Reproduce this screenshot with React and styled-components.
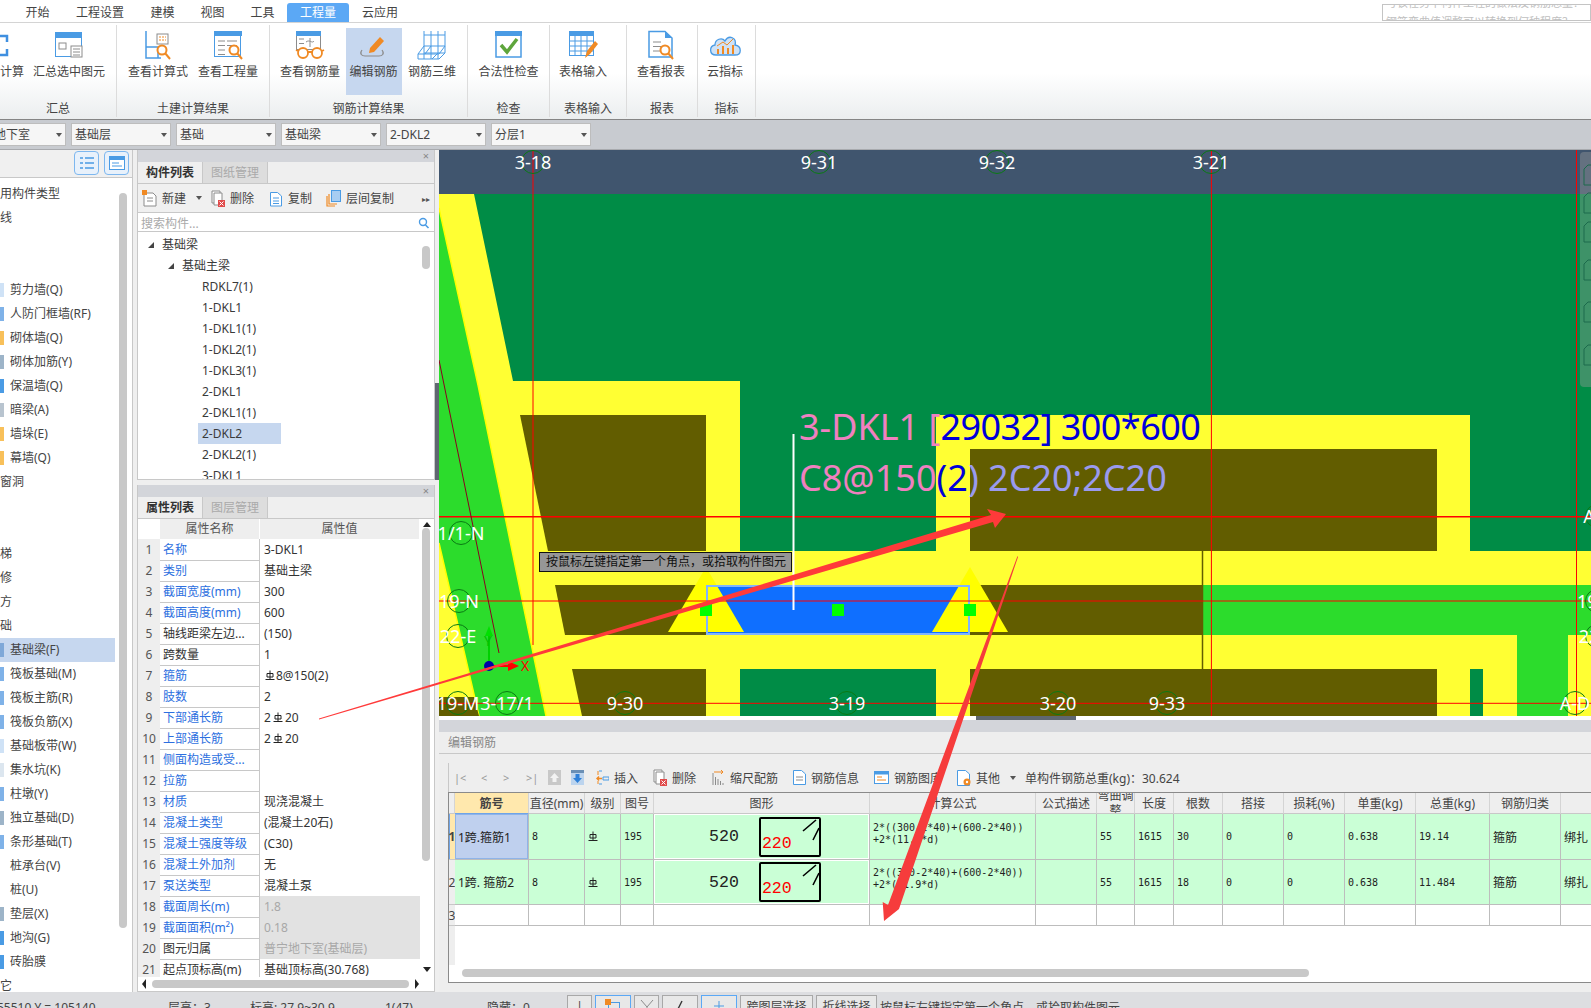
import React from 'react';
import styled, { createGlobalStyle } from 'styled-components';

const GlobalStyle = createGlobalStyle`
  html, body { margin: 0; padding: 0; background: #eee; }
  * { box-sizing: border-box; }
  body {
    font-family: "Noto Sans", "Noto Sans CJK SC", sans-serif;
    font-size: 12px;
    color: #333;
  }
`;

const Page = styled.div`
  position: relative;
  width: 1591px;
  height: 1008px;
  overflow: hidden;
  display: flex;
  flex-direction: column;
`;

/* top tabs */
const TabBar = styled.div`
  height: 23px;
  flex: none;
  background: #fff;
  border-bottom: 1px solid #d4d4d4;
  display: flex;
  align-items: flex-end;
  padding-left: 13px;
`;

const Tab = styled.div`
  height: 19px;
  width: ${(p) => p.$w}px;
  line-height: 20px;
  text-align: center;
  border-radius: 3px 3px 0 0;
  background: ${(p) => (p.$active ? '#5ba8f5' : 'transparent')};
  color: ${(p) => (p.$active ? '#fff' : '#444')};
`;

const HelpBox = styled.div`
  margin-left: auto;
  align-self: flex-start;
  margin-top: 4px;
  width: 209px;
  height: 17px;
  border: 1px solid #c4c4c4;
  overflow: hidden;
  color: #c0c0c0;
  font-size: 11px;
  line-height: 12px;
  white-space: nowrap;
  padding-left: 3px;
`;

const HelpLine = styled.div`
  margin-top: ${(p) => p.$mt}px;
  height: 12px;
`;

/* ribbon */
const Ribbon = styled.div`
  height: 97px;
  flex: none;
  display: flex;
  padding-top: 2px;
  background: linear-gradient(#fff 0, #fff 50px, #ebeeef 96px);
  border-bottom: 1px solid #858585;
`;

const RibbonGroup = styled.div`
  width: ${(p) => p.$w}px;
  height: 92px;
  display: flex;
  flex-direction: column;
  border-right: 1px solid #dcdcdc;
`;

const RibbonButtons = styled.div`
  height: 70px;
  padding-top: 3px;
  display: flex;
  justify-content: ${(p) => (p.$start ? 'flex-start' : 'center')};
`;

const RibbonButton = styled.div`
  width: ${(p) => p.$w}px;
  height: 67px;
  flex: none;
  display: flex;
  flex-direction: column;
  align-items: center;
  padding-top: 1px;
  background: ${(p) => (p.$active ? '#c6d7ef' : 'transparent')};
  white-space: nowrap;
`;

const IconSlot = styled.div`
  height: 32px;
  display: flex;
  align-items: center;
  justify-content: center;
  align-self: ${(p) => (p.$left ? 'flex-start' : 'center')};
`;

const RibbonLabel = styled.div`
  margin-top: 3px;
  line-height: 16px;
  color: #444;
`;

const GroupLabel = styled.div`
  text-align: center;
  line-height: 16px;
  margin-top: 6px;
  color: #444;
`;

/* filter bar */
const FilterBar = styled.div`
  height: 30px;
  flex: none;
  background: #c8cbd0;
  border-bottom: 1px solid #a8aaae;
  display: flex;
  align-items: center;
  gap: 5px;
`;

const SelectBox = styled.div`
  width: 100px;
  height: 23px;
  margin-left: ${(p) => p.$ml || 0}px;
  background: #f6f6f6;
  border: 1px solid #bdbdbd;
  padding-left: 3px;
  line-height: 20px;
  color: #444;
  display: flex;
  justify-content: space-between;
  align-items: center;
  padding-right: 3px;
`;

const Caret = styled.span`
  width: 0;
  height: 0;
  flex: none;
  border-left: 3px solid transparent;
  border-right: 3px solid transparent;
  border-top: 4px solid #555;
  margin-left: ${(p) => p.$ml || 0}px;
`;

/* main area */
const Main = styled.div`
  flex: none;
  height: 842px;
  display: flex;
  background: #efefef;
`;

const LeftPanel = styled.div`
  width: 133px;
  flex: none;
  border-right: 1px solid #c8c8c8;
  background: #fff;
  position: relative;
  overflow: hidden;
`;

const LeftHead = styled.div`
  height: 28px;
  background: #f0f0f0;
  border-bottom: 1px solid #c8c8c8;
  display: flex;
  justify-content: flex-end;
  gap: 5px;
  padding: 1px 3px 0 0;
`;

const ViewButton = styled.div`
  width: 25px;
  height: 24px;
  border: 1px solid #7db7ef;
  border-radius: 4px;
  background: #e8f1fb;
  display: flex;
  align-items: center;
  justify-content: center;
`;

const LeftList = styled.div`
  padding-top: 4px;
`;

const LeftRow = styled.div`
  height: 24px;
  width: 115px;
  line-height: 24px;
  display: flex;
  align-items: center;
  white-space: nowrap;
  background: ${(p) => (p.$active ? '#c6d7ef' : 'transparent')};
  color: #444;
`;

const LeftMark = styled.span`
  height: 14px;
  flex: none;
  margin-right: ${(p) => (p.$plain ? 0 : 6)}px;
  background: ${(p) => p.$c || 'transparent'};
  width: ${(p) => (p.$plain ? 0 : 4)}px;
`;

const LeftScroll = styled.div`
  position: absolute;
  left: 119px;
  top: 43px;
  width: 8px;
  height: 735px;
  border-radius: 4px;
  background: #c8c8c8;
`;

const MiddleColumn = styled.div`
  width: 298px;
  margin-left: 4px;
  flex: none;
  display: flex;
  flex-direction: column;
  gap: 5px;
`;

const Panel = styled.div`
  height: ${(p) => p.$h}px;
  flex: none;
  background: #fff;
  border: 1px solid #c8c8c8;
  border-top: none;
  position: relative;
  overflow: hidden;
`;

const PanelStrip = styled.div`
  height: 12px;
  background: #d3d5da;
  text-align: right;
  padding-right: 5px;
  line-height: 11px;
  font-size: 11px;
  color: #888;
`;

const PanelTabs = styled.div`
  height: 22px;
  display: flex;
  background: #efefef;
  border-bottom: 1px solid #c8c8c8;
`;

const PanelTab = styled.div`
  width: 65px;
  text-align: center;
  line-height: 21px;
  font-weight: ${(p) => (p.$active ? 700 : 400)};
  color: ${(p) => (p.$active ? '#333' : '#aaa')};
  background: ${(p) => (p.$active ? '#efefef' : '#dddddd')};
  border-right: 1px solid #c8c8c8;
`;

const MiniBar = styled.div`
  height: 29px;
  background: #f0f0f0;
  border-bottom: 1px solid #c8c8c8;
  display: flex;
  align-items: center;
  padding-left: 4px;
  position: relative;
`;

const MiniItem = styled.div`
  width: ${(p) => p.$w}px;
  flex: none;
  display: flex;
  align-items: center;
  gap: 5px;
  color: #444;
  white-space: nowrap;
`;

const MoreMark = styled.span`
  position: absolute;
  right: 4px;
  font-size: 8px;
  color: #555;
`;

const SearchRow = styled.div`
  height: 19px;
  border-bottom: 1px solid #c8c8c8;
  padding: 1px 4px 0 3px;
  display: flex;
  justify-content: space-between;
  align-items: center;
  color: #aaa;
  background: #fff;
`;

const TreeWrap = styled.div`
  padding-top: 2px;
`;

const TreeRow = styled.div`
  height: 21px;
  line-height: 21px;
  display: flex;
  align-items: center;
  padding-left: ${(p) => p.$indent}px;
  color: #3a3a3a;
`;

const TreeLabel = styled.span`
  padding: 0 ${(p) => (p.$active ? 33 : 0)}px 0 4px;
  background: ${(p) => (p.$active ? '#c6d7ef' : 'transparent')};
  height: 21px;
  min-width: 83px;
`;

const TreeArrow = styled.span`
  width: 0;
  height: 0;
  flex: none;
  margin-right: 8px;
  border-bottom: 6px solid #444;
  border-left: 6px solid transparent;
`;

const VScroll = styled.div`
  position: absolute;
  left: 284px;
  top: ${(p) => p.$top}px;
  width: 8px;
  height: ${(p) => p.$h}px;
  border-radius: 4px;
  background: #c8c8c8;
`;

const PropHead = styled.div`
  display: grid;
  grid-template-columns: 22px 100px 160px;
  height: 20px;
`;

const PropHeadCell = styled.div`
  text-align: center;
  line-height: 19px;
  background: ${(p) => (p.$blank ? '#fff' : '#eee')};
  border-right: 1px solid #fff;
  color: #555;
`;

const PropBody = styled.div`
  height: 438px;
  overflow: hidden;
`;

const PropRow = styled.div`
  display: grid;
  grid-template-columns: 22px 100px 160px;
  height: 21px;
`;

const PropIndex = styled.div`
  background: #eee;
  border-bottom: 1px solid #c8c8c8;
  text-align: center;
  line-height: 21px;
  color: #555;
`;

const PropName = styled.div`
  padding-left: 3px;
  line-height: 21px;
  border-bottom: 1px solid #c8c8c8;
  border-right: 1px solid #c8c8c8;
  color: ${(p) => (p.$link ? '#2c6fe0' : '#333')};
  white-space: nowrap;
  overflow: hidden;
`;

const PropValue = styled.div`
  padding-left: 4px;
  line-height: 21px;
  border-bottom: 1px solid #c8c8c8;
  background: ${(p) => (p.$gray ? '#e2e2e2' : '#fff')};
  color: ${(p) => (p.$gray ? '#a8a8a8' : '#333')};
  white-space: nowrap;
  display: flex;
  align-items: center;
`;

const RebarGlyph = styled.svg`
  flex: none;
  margin: 0 ${(p) => p.$gap || 0}px;
`;

const HScroll = styled.div`
  height: 13px;
  display: flex;
  align-items: center;
  padding-left: 4px;
`;

const HThumb = styled.div`
  width: 257px;
  height: 8px;
  margin: 0 6px;
  border-radius: 4px;
  background: #c8c8c8;
`;

const SideArrow = styled.span`
  width: 0;
  height: 0;
  border-top: 5px solid transparent;
  border-bottom: 5px solid transparent;
  border-${(p) => (p.$left ? 'right' : 'left')}: 4px solid #222;
`;

const VArrow = styled.span`
  position: absolute;
  left: 285px;
  top: ${(p) => p.$top}px;
  width: 0;
  height: 0;
  border-left: 4px solid transparent;
  border-right: 4px solid transparent;
  border-${(p) => (p.$up ? 'bottom' : 'top')}: 5px solid #222;
`;

const Gutter = styled.div`
  width: 4px;
  flex: none;
  display: flex;
  flex-direction: column;
`;

const GutterDark = styled.div`
  margin-top: 233px;
  height: 97px;
  background: #5f6770;
`;

const RightColumn = styled.div`
  flex: 1;
  min-width: 0;
  display: flex;
  flex-direction: column;
`;

const Canvas = styled.svg`
  display: block;
  width: 1152px;
  height: 566px;
  flex: none;
`;

const AxisText = styled.text`
  font-family: "Noto Sans", sans-serif;
  font-size: 18px;
  fill: #fff;
`;

const BeamText = styled.text`
  font-family: "Noto Sans", sans-serif;
  font-size: 36px;
`;

const BeamNarrow = styled.tspan`
  letter-spacing: -0.55px;
`;

const AxisMark = styled.text`
  font-family: "Noto Sans", sans-serif;
  font-size: 14px;
`;

const Tooltip = styled.div`
  position: absolute;
  left: 539px;
  top: 552px;
  width: 253px;
  height: 20px;
  background: #969696;
  border: 1px solid #111;
  color: #111;
  line-height: 18px;
  padding-left: 6px;
  white-space: nowrap;
`;

const Splitter = styled.div`
  height: 4px;
  flex: none;
  background: #fff;
  padding-left: 537px;
`;

const SplitterGrip = styled.div`
  width: 100px;
  height: 4px;
  background: #5f6770;
`;

const RebarPanel = styled.div`
  flex: 1;
  min-height: 0;
  background: #eee;
  display: flex;
  flex-direction: column;
`;

const RebarTitle = styled.div`
  height: 22px;
  flex: none;
  padding-left: 9px;
  line-height: 21px;
  color: #888;
  border-bottom: 1px solid #c8c8c8;
`;

const RebarToolbar = styled.div`
  height: 29px;
  flex: none;
  margin: 9px 0 0 9px;
  border-left: 1px solid #c8c8c8;
  display: flex;
  align-items: center;
  padding-left: 5px;
`;

const NavMark = styled.span`
  width: ${(p) => p.$w}px;
  flex: none;
  color: #999;
  font-size: 11px;
`;

const RebarTotal = styled.span`
  white-space: nowrap;
  color: #444;
`;

const RebarTable = styled.div`
  margin-left: 9px;
  height: 191px;
  flex: none;
  background: #fff;
  border: 1px solid #8a8a8a;
  border-right: none;
  overflow: hidden;
  display: flex;
  flex-direction: column;
`;

const RebarGrid = styled.div`
  width: 1180px;
  flex: none;
  display: grid;
  grid-template-columns: 6px 74px 56px 36px 33px 216px 166px 61px 38px 39px 49px 61px 61px 71px 74px 71px 60px;
  grid-template-rows: 21px 46px 45px 21px;
`;

const HeadCell = styled.div`
  display: flex;
  align-items: center;
  justify-content: center;
  text-align: center;
  overflow: hidden;
  line-height: 15px;
  background: ${(p) => (p.$key ? '#ffe8ad' : '#eee')};
  font-weight: ${(p) => (p.$key ? 700 : 400)};
  border-right: 1px solid #d4d4d4;
  border-bottom: 1px solid ${(p) => (p.$key ? '#6ea4e8' : '#c8c8c8')};
  color: #444;
  white-space: ${(p) => (p.$wrap ? 'normal' : 'nowrap')};
`;

const RowHead = styled.div`
  background: ${(p) => (p.$on ? '#ffe8ad' : '#eee')};
  border-bottom: 1px solid #c8c8c8;
  font-weight: ${(p) => (p.$on ? 700 : 400)};
  display: flex;
  align-items: center;
  justify-content: center;
  overflow: hidden;
  color: #444;
  box-shadow: ${(p) => (p.$on ? 'inset 1px 0 0 #6ea4e8' : 'none')};
`;

const DataCell = styled.div`
  background: ${(p) => (p.$sel ? '#bfd0ee' : p.$blank ? '#fff' : '#caffd6')};
  border-right: 1px solid #bdbdbd;
  border-bottom: 1px solid #bdbdbd;
  box-shadow: ${(p) => (p.$sel ? 'inset 0 0 0 1px #8fb4e8' : 'none')};
  display: flex;
  align-items: center;
  padding-left: 3px;
  font-family: ${(p) => (p.$cjk ? '"Noto Sans", "Noto Sans CJK SC", sans-serif' : '"DejaVu Sans Mono", monospace')};
  font-size: ${(p) => (p.$cjk ? 12 : 10)}px;
  color: #222;
  white-space: nowrap;
  overflow: hidden;
`;

const FormulaCell = styled(DataCell)`
  white-space: pre-line;
  line-height: 12px;
  padding-bottom: 6px;
`;

const ShapeCell = styled.div`
  background: #caffd6;
  border-right: 1px solid #bdbdbd;
  border-bottom: 1px solid #bdbdbd;
  box-shadow: inset 0 0 0 1px #fff;
  display: flex;
  align-items: center;
  padding-left: 55px;
  gap: 20px;
`;

const ShapeNumber = styled.span`
  font-family: "Liberation Mono", monospace;
  font-size: 16.6px;
  color: #222;
`;

const ShapeBox = styled.div`
  width: 62px;
  height: 40px;
  border: 2px solid #000;
  border-radius: 2px;
  position: relative;
  display: flex;
  align-items: flex-end;
  padding: 0 0 1px 1px;
`;

const ShapeRed = styled.span`
  font-family: "Liberation Mono", monospace;
  font-size: 16.6px;
  line-height: 20px;
  color: #f00;
`;

const ShapeTicks = styled.svg`
  position: absolute;
  right: 0;
  top: 0;
  width: 26px;
  height: 24px;
`;

const TableFiller = styled.div`
  height: 39px;
  flex: none;
  width: 6px;
  background: #eee;
`;

const TableScroll = styled.div`
  height: 16px;
  flex: none;
  padding: 4px 0 0 13px;
`;

const TableThumb = styled.div`
  width: 847px;
  height: 8px;
  border-radius: 4px;
  background: #c8c8c8;
`;

/* status bar */
const StatusBar = styled.div`
  height: 30px;
  flex: none;
  background: #dddee1;
  display: flex;
  padding-top: 3px;
  color: #444;
  white-space: nowrap;
`;

const StatusText = styled.div`
  width: ${(p) => p.$w}px;
  flex: none;
  margin-left: ${(p) => p.$ml || 0}px;
  padding-top: 5px;
  line-height: 16px;
`;

const StatusButton = styled.div`
  width: ${(p) => p.$w}px;
  height: 24px;
  flex: none;
  margin-right: 3px;
  background: #e8e8e8;
  border: 1px solid ${(p) => (p.$blue ? '#5ba8f5' : '#a8a8a8')};
  display: flex;
  align-items: flex-start;
  justify-content: center;
  padding-top: 3px;
  gap: 3px;
  line-height: 16px;
`;

const ArrowOverlay = styled.svg`
  position: absolute;
  left: 0;
  top: 0;
  width: 1591px;
  height: 1008px;
  pointer-events: none;
`;

const BLUE = '#4a9be4';
const ORANGE = '#f08a24';
const GRAY = '#8c8c8c';

const S = ({ w = 30, h = 30, children }) => (
  <svg width={w} height={h} viewBox={`0 0 ${w} ${h}`} fill="none" strokeWidth="1">{children}</svg>
);

const Glass = ({ x, y }) => (
  <g stroke={ORANGE} strokeWidth="2" fill="#fff">
    <circle cx={x} cy={y} r="4.5" />
    <path d={`M${x + 3} ${y + 3}l5 6`} />
  </g>
);

const Lines = ({ x, y, n = 3, w = 10 }) => (
  <g stroke={GRAY}>
    {Array.from({ length: n }).map((_, i) => <path key={i} d={`M${x} ${y + i * 4.5}h${w}`} />)}
  </g>
);

const ribbonIcons = {
  calc: (
    <svg width="10" height="28" viewBox="0 0 10 28" fill="none">
      <path d="M0 5H7V11M7 18V24H0" stroke="#3f8fe0" strokeWidth="2.5" />
    </svg>
  ),
  selected: (
    <S>
      <rect x="1.5" y="2.5" width="26" height="24" stroke={BLUE} fill="#fff" />
      <rect x="1" y="2" width="27" height="6" fill={BLUE} />
      <rect x="5" y="13" width="7" height="6" stroke={GRAY} />
      <rect x="17" y="16" width="11" height="11" fill="#fff" stroke={GRAY} />
      <path d="M19 19h7M19 22h7M19 25h7" stroke={GRAY} />
    </S>
  ),
  formula: (
    <S>
      <path d="M3 1V28H18M3 17H15V28" stroke={BLUE} strokeWidth="1.5" />
      <rect x="14" y="4" width="11" height="10" stroke={GRAY} />
      <path d="M16 7h7M16 10h7" stroke={ORANGE} strokeDasharray="2 1" />
      <Glass x={19} y={20} />
    </S>
  ),
  quantity: (
    <S>
      <rect x="1.5" y="1.5" width="26" height="25" stroke={BLUE} fill="#fff" />
      <rect x="1" y="1" width="28" height="5" fill={BLUE} />
      <Lines x={5} y={11} n={4} w={7} />
      <Lines x={14} y={11} n={2} w={10} />
      <Glass x={21} y={20} />
    </S>
  ),
  rebar: (
    <S>
      <rect x="1.5" y="2.5" width="24" height="17" stroke={GRAY} fill="#fff" />
      <rect x="1" y="1" width="25" height="5" fill={BLUE} />
      <path d="M15 8V17M11 12c4-3 6 2 8-1" stroke={GRAY} />
      <Lines x={4} y={9} n={2} w={5} />
      <g stroke={ORANGE} strokeWidth="1.8">
        <circle cx="8" cy="23" r="5" fill="#fff" />
        <circle cx="22" cy="23" r="5" fill="#fff" />
        <path d="M13 22h4M1 20l2 1M29 20l-2 1" />
      </g>
    </S>
  ),
  edit: (
    <S>
      <path d="M3 20c-3 4 0 6 3 6h14c3 0 6-2 3-6" stroke={GRAY} strokeWidth="1.2" />
      <path d="M11 18l10-11 4 4-10 11-5 1z" fill={ORANGE} />
    </S>
  ),
  cage: (
    <S>
      <g stroke={BLUE}>
        <path d="M7 1V29M14 1V29M21 1V29M28 1V23" />
        <path d="M7 5H28M7 16H28M7 23H28M1 29H22" />
        <path d="M7 16L1 24V29M28 16L22 24M14 16L8 24M1 24H22M21 23L15 29M28 23L22 29" />
      </g>
    </S>
  ),
  check: (
    <S>
      <rect x="2" y="2" width="25" height="25" stroke={BLUE} strokeWidth="1.5" fill="#fff" />
      <rect x="1" y="1" width="27" height="5" fill={BLUE} />
      <path d="M7 15l6 7 10-13" stroke="#5ea53c" strokeWidth="3.5" />
    </S>
  ),
  table: (
    <S>
      <rect x="1" y="1" width="25" height="5" fill={BLUE} />
      <rect x="1.5" y="5.5" width="24" height="20" stroke={BLUE} fill="#fff" />
      <path d="M1 11h25M1 16h25M1 21h25M7 6v20M13 6v20M19 6v20" stroke={BLUE} />
      <path d="M17 28l2-7 8-10 3 3-8 10z" fill={ORANGE} />
    </S>
  ),
  report: (
    <S>
      <path d="M3 1.5H19L26 8V27H3z" stroke={BLUE} strokeWidth="1.5" fill="#fff" />
      <path d="M19 1V8H26z" fill={BLUE} />
      <Lines x={7} y={12} n={3} w={8} />
      <Glass x={19} y={20} />
    </S>
  ),
  cloud: (
    <S w={32}>
      <path d="M7 25C0 25 0 16 6 15 6 9 13 7 16 11 20 4 28 8 26 15 33 16 33 25 26 25z" fill="#cfe2f6" stroke={BLUE} strokeWidth="1.3" />
      <path d="M9 24v-5M14 24v-8M19 24v-6M24 24v-9" stroke={ORANGE} strokeWidth="2" />
      <path d="M8 16l6-4 4 3 6-6" stroke={ORANGE} />
    </S>
  ),
};

const ribbonGroups = [
  { w: 117, label: '汇总', start: true, buttons: [
    { w: 24, label: '计算', icon: 'calc', left: true },
    { w: 90, label: '汇总选中图元', icon: 'selected' },
  ] },
  { w: 153, label: '土建计算结果', buttons: [
    { w: 70, label: '查看计算式', icon: 'formula' },
    { w: 70, label: '查看工程量', icon: 'quantity' },
  ] },
  { w: 198, label: '钢筋计算结果', buttons: [
    { w: 71, label: '查看钢筋量', icon: 'rebar' },
    { w: 56, label: '编辑钢筋', icon: 'edit', active: true },
    { w: 61, label: '钢筋三维', icon: 'cage' },
  ] },
  { w: 82, label: '检查', buttons: [{ w: 80, label: '合法性检查', icon: 'check' }] },
  { w: 77, label: '表格输入', start: true, buttons: [{ w: 66, label: '表格输入', icon: 'table' }] },
  { w: 71, label: '报表', start: true, buttons: [{ w: 68, label: '查看报表', icon: 'report' }] },
  { w: 58, label: '指标', start: true, buttons: [{ w: 54, label: '云指标', icon: 'cloud' }] },
];

const leftRows = [
  { t: '用构件类型', plain: true }, { t: '线', plain: true }, { t: '', plain: true }, { t: '', plain: true },
  { t: '剪力墙(Q)', c: '#cfe2f6' }, { t: '人防门框墙(RF)', c: '#7fb2e8' }, { t: '砌体墙(Q)', c: '#f8c05a' },
  { t: '砌体加筋(Y)', c: '#9db4c8' }, { t: '保温墙(Q)', c: '#4a9be4' }, { t: '暗梁(A)', c: '#b8c4cf' },
  { t: '墙垛(E)', c: '#f8c05a' }, { t: '幕墙(Q)', c: '#f8c05a' }, { t: '窗洞', plain: true },
  { t: '', plain: true }, { t: '', plain: true }, { t: '梯', plain: true }, { t: '修', plain: true },
  { t: '方', plain: true }, { t: '础', plain: true },
  { t: '基础梁(F)', c: '#7fa8d8', active: true }, { t: '筏板基础(M)', c: '#7fb2e8' }, { t: '筏板主筋(R)', c: '#7fb2e8' },
  { t: '筏板负筋(X)', c: '#7fb2e8' }, { t: '基础板带(W)', c: '#cfe2f6' }, { t: '集水坑(K)', c: '#dce6ef' },
  { t: '柱墩(Y)', c: '#7fb2e8' }, { t: '独立基础(D)', c: '#9db4c8' }, { t: '条形基础(T)', c: '#7fb2e8' },
  { t: '桩承台(V)' }, { t: '桩(U)' }, { t: '垫层(X)', c: '#9db4c8' }, { t: '地沟(G)', c: '#4a9be4' },
  { t: '砖胎膜', c: '#4a9be4' }, { t: '它', plain: true },
];

const treeItems = ['RDKL7(1)', '1-DKL1', '1-DKL1(1)', '1-DKL2(1)', '1-DKL3(1)', '2-DKL1', '2-DKL1(1)', '2-DKL2', '2-DKL2(1)', '3-DKL1'];

const Rebar = ({ gap }) => (
  <RebarGlyph $gap={gap} width="10" height="11" viewBox="0 0 10 11" fill="none" stroke="#222">
    <path d="M5 0.5V9.5M2 3.5H8V7H2zM0.5 9.5H9.5" />
  </RebarGlyph>
);

const propRows = [
  ['名称', '3-DKL1', true], ['类别', '基础主梁', true], ['截面宽度(mm)', '300', true], ['截面高度(mm)', '600', true],
  ['轴线距梁左边...', '(150)', false], ['跨数量', '1', false], ['箍筋', <><Rebar gap={1} />8@150(2)</>, true], ['肢数', '2', true],
  ['下部通长筋', <>2<Rebar gap={2} />20</>, true], ['上部通长筋', <>2<Rebar gap={2} />20</>, true], ['侧面构造或受...', '', true], ['拉筋', '', true],
  ['材质', '现浇混凝土', true], ['混凝土类型', '(混凝土20石)', true], ['混凝土强度等级', '(C30)', true], ['混凝土外加剂', '无', true],
  ['泵送类型', '混凝土泵', true], ['截面周长(m)', '1.8', true, true], ['截面面积(m²)', '0.18', true, true],
  ['图元归属', '普宁地下室(基础层)', false, true], ['起点顶标高(m)', '基础顶标高(30.768)', false],
];

const miniIcons = {
  add: (
    <S w={15} h={17}>
      <path d="M2 3H11L14 6V16H2z" stroke={GRAY} fill="#fff" />
      <path d="M5 8h6M5 11h6" stroke={GRAY} />
      <rect x="0" y="0" width="5" height="5" fill={ORANGE} />
    </S>
  ),
  del: (
    <S w={15} h={17}>
      <path d="M2 1H10V13H2z" stroke={GRAY} fill="#fff" />
      <path d="M4 3H12V15H4z" stroke={GRAY} fill="#fff" />
      <rect x="8" y="10" width="7" height="7" fill="#e04b4b" />
      <path d="M9.5 11.5l4 4m0-4l-4 4" stroke="#fff" />
    </S>
  ),
  copy: (
    <S w={14} h={17}>
      <path d="M1.5 2.5H8.5L12.5 6V16H1.5z" stroke={BLUE} fill="#fff" />
      <path d="M4 8h6M4 11h6M4 13.5h6" stroke={BLUE} />
    </S>
  ),
  floor: (
    <S w={15} h={17}>
      <path d="M1 6V16H9M3 4V14H11" stroke={ORANGE} strokeWidth="1.2" />
      <rect x="5.5" y="0.5" width="9" height="11" fill="#a8cdf2" stroke={BLUE} />
    </S>
  ),
  search: (
    <S w={12} h={12}>
      <circle cx="5" cy="5" r="3.5" stroke={BLUE} strokeWidth="1.4" />
      <path d="M7.5 8l3 3" stroke={BLUE} strokeWidth="1.6" />
    </S>
  ),
  up: (
    <S w={13} h={15}>
      <rect x="0" y="0" width="13" height="15" fill="#c8c8c8" />
      <path d="M6.5 3L11 8H8.5V12H4.5V8H2z" fill="#f2f2f2" />
    </S>
  ),
  down: (
    <S w={13} h={15}>
      <rect x="0" y="0" width="13" height="15" fill="#bcd4ee" />
      <rect x="0" y="0" width="13" height="3" fill="#6a8fb5" />
      <path d="M6.5 13L11 8H8.5V4H4.5V8H2z" fill="#2f80d8" />
    </S>
  ),
  insert: (
    <S w={13} h={15}>
      <path d="M3 1H6M3 14H6M7 7H13V10H7z" stroke={BLUE} />
      <path d="M6 8.5H1M3 6.5L1 8.5L3 10.5" stroke={ORANGE} strokeWidth="1.5" />
      <path d="M2 1V5M2 11V14" stroke={ORANGE} />
    </S>
  ),
  scale: (
    <S w={13} h={15}>
      <path d="M1 3V15M3.5 7V15M6 9V15M8.5 11V15M11 13V15" stroke={GRAY} />
      <path d="M2 2H11M9 0L11 2L9 4" stroke={ORANGE} />
    </S>
  ),
  info: (
    <S w={13} h={15}>
      <path d="M0.5 0.5H8.5L12.5 4V14.5H0.5z" stroke={BLUE} fill="#fff" />
      <path d="M3 7h7M3 10h7" stroke={GRAY} />
    </S>
  ),
  library: (
    <S w={15} h={13}>
      <rect x="0.5" y="0.5" width="14" height="12" stroke={BLUE} fill="#fff" />
      <rect x="0" y="0" width="15" height="3.5" fill={BLUE} />
      <path d="M3 6H8M3 9H12" stroke={ORANGE} />
    </S>
  ),
  other: (
    <S w={14} h={16}>
      <path d="M0.5 0.5H8.5L12.5 4V15.5H0.5z" stroke={BLUE} fill="#fff" />
      <circle cx="10" cy="12" r="3.5" fill={ORANGE} />
      <circle cx="10" cy="12" r="1.2" fill="#fff" />
    </S>
  ),
};

const rebarHead = ['直径(mm)', '级别', '图号', '图形', '计算公式', '公式描述', '弯曲调整', '长度', '根数', '搭接', '损耗(%)', '单重(kg)', '总重(kg)', '钢筋归类', ''];

const rebarRows = [
  { n: '1', name: '1跨.箍筋1', num: '30', total: '19.14', sel: true, f: '2*((300-2*40)+(600-2*40))\n+2*(11.9*d)' },
  { n: '2', name: '1跨. 箍筋2', num: '18', total: '11.484', f: '2*((300-2*40)+(600-2*40))\n+2*(11.9*d)' },
];

const RebarRow = ({ r }) => (
  <>
    <RowHead $on={r.sel}>{r.n}</RowHead>
    <DataCell $cjk $sel={r.sel}>{r.name}</DataCell>
    <DataCell>8</DataCell>
    <DataCell><Rebar /></DataCell>
    <DataCell>195</DataCell>
    <ShapeCell>
      <ShapeNumber>520</ShapeNumber>
      <ShapeBox>
        <ShapeRed>220</ShapeRed>
        <ShapeTicks viewBox="0 0 26 24">
          <path d="M10 12L23 1M20 21L26 9" stroke="#000" strokeWidth="1.6" />
        </ShapeTicks>
      </ShapeBox>
    </ShapeCell>
    <FormulaCell>{r.f}</FormulaCell>
    <DataCell />
    <DataCell>55</DataCell>
    <DataCell>1615</DataCell>
    <DataCell>{r.num}</DataCell>
    <DataCell>0</DataCell>
    <DataCell>0</DataCell>
    <DataCell>0.638</DataCell>
    <DataCell>{r.total}</DataCell>
    <DataCell $cjk>箍筋</DataCell>
    <DataCell $cjk>绑扎</DataCell>
  </>
);

const BRIGHT = '#2cdc2c';
const DARK = '#625d00';
const GREEN = '#008c46';
const YELLOW = '#ffff33';

const axes = [
  ['3-18', 533, 162], ['9-31', 819, 162], ['9-32', 997, 162], ['3-21', 1211, 162],
  ['19-M', 458, 703], ['3-17/1', 507, 703], ['9-30', 625, 703], ['3-19', 847, 703],
  ['3-20', 1058, 703], ['9-33', 1167, 703], ['A-D', 1575, 703],
  ['1/1-N', 461, 533], ['19-N', 459, 601], ['22-E', 458, 636],
  ['19-N', 1597, 601], ['22-E', 1597, 636], ['A-E', 1597, 516],
];

const drawingIcons = [165, 193, 222, 260, 302, 345];

const DrawingCanvas = () => (
  <Canvas viewBox="439 150 1152 566">
    <rect x="439" y="150" width="1152" height="566" fill={GREEN} />
    <polygon points="439,190 474,194 513,381 740,381 740,551 1591,551 1591,716 439,716" fill={YELLOW} />
    <rect x="936" y="415" width="534" height="136" fill={YELLOW} />
    <polygon points="439,208 478,385 546,716 479,716 439,543" fill={BRIGHT} />
    <path d="M439 208L478 385L546 716M439 543L479 716" stroke="#ffff00" strokeWidth="1.5" fill="none" />
    <polygon points="520,415 706,415 706,551 548,551" fill={DARK} />
    <rect x="970" y="449" width="467" height="102" fill={DARK} />
    <polygon points="555,585 706,585 706,635 565,635" fill={DARK} />
    <rect x="970" y="585" width="232" height="50" fill={DARK} />
    <rect x="1203" y="585" width="388" height="50" fill={BRIGHT} />
    <rect x="1517" y="635" width="51" height="81" fill={BRIGHT} />
    <path d="M1202.5 551V669" stroke={DARK} strokeWidth="1.5" />
    <polygon points="572,669 706,669 706,716 582,716" fill={DARK} />
    <rect x="740" y="669" width="196" height="47" fill={GREEN} />
    <rect x="970" y="669" width="467" height="47" fill={DARK} />
    <rect x="1470" y="669" width="13" height="47" fill={GREEN} />
    <polygon points="439,697 474,697 479,716 439,716" fill={DARK} />
    <rect x="706" y="585" width="264" height="50" fill="#0f6fff" />
    <polygon points="706,567 668,632 744,632" fill="#ffff00" />
    <polygon points="970,567 932,632 1008,632" fill="#ffff00" />
    <rect x="707" y="586" width="262" height="48" fill="none" stroke="#7fb4ff" strokeWidth="2" />
    <rect x="439" y="150" width="1152" height="44" fill="#40556e" />
    <path d="M533 150V645M1211.4 150V716M1576.5 150V716" stroke="#f00" strokeWidth="1" />
    <path d="M439 516.7H1591" stroke="#f00" strokeWidth="1.5" />
    <path d="M439 601H1591M439 703.3H1591" stroke="#f00" strokeWidth="1" />
    <path d="M439 360L499 653" stroke="#8b0020" strokeWidth="1" />
    <path d="M793.5 434V610" stroke="#fff" strokeWidth="2" />
    {[706, 838, 970].map((x) => <rect key={x} x={x - 6} y="604" width="12" height="12" fill="#00ff00" />)}
    <path d="M489 666V630" stroke="#00d000" strokeWidth="2" />
    <polygon points="489,626 485,636 493,636" fill="#00e000" />
    <path d="M489 666H510" stroke="#f00" strokeWidth="2" />
    <polygon points="519,666 508,661 508,671" fill="#f00" />
    <circle cx="489" cy="666" r="5" fill="#0000a8" />
    <AxisMark x="521" y="671" fill="#f00">X</AxisMark>
    <AxisMark x="484" y="646" fill="#00c000">Y</AxisMark>
    {axes.map(([t, x, y]) => (
      <g key={t + x}>
        <circle cx={x} cy={y} r="11.5" fill="none" stroke="#0a7a14" />
        <AxisText x={x} y={y + 7} textAnchor="middle">{t}</AxisText>
      </g>
    ))}
    <BeamText x="799" y="440">
      <tspan fill="#f080c0">3-DKL1 [</tspan>
      <BeamNarrow fill="#0000d8">29032] 300*600</BeamNarrow>
    </BeamText>
    <BeamText x="799" y="491">
      <tspan fill="#f080c0">C8@150</tspan>
      <tspan fill="#0000d8">(2</tspan>
      <tspan fill="#9a9aee">) 2C20;2C20</tspan>
    </BeamText>
    <rect x="1580" y="152" width="20" height="235" rx="4" fill="#9a9a9a" fillOpacity="0.4" />
    {drawingIcons.map((y) => (
      <g key={y} fill="none" stroke="#1c6a4c">
        <path d={`M1591 ${y}H1588L1584 ${y + 4}V${y + 20}H1591`} />
      </g>
    ))}
  </Canvas>
);

const App = () => (
  <>
    <GlobalStyle />
    <Page>
      <TabBar>
        {[['开始', 49], ['工程设置', 76], ['建模', 49], ['视图', 51], ['工具', 49], ['工程量', 62, true], ['云应用', 62]].map(([t, w, active]) => (
          <Tab key={t} $w={w} $active={active}>{t}</Tab>
        ))}
        <HelpBox>
          <HelpLine $mt={-8}>写该任务下构件工程的做法及钢筋总量？</HelpLine>
          <HelpLine $mt={7}>钢筋弯曲值调整可以转换到何种程度？</HelpLine>
        </HelpBox>
      </TabBar>

      <Ribbon>
        {ribbonGroups.map((g) => (
          <RibbonGroup key={g.label + g.w} $w={g.w}>
            <RibbonButtons $start={g.start}>
              {g.buttons.map((b) => (
                <RibbonButton key={b.label} $w={b.w} $active={b.active}>
                  <IconSlot $left={b.left}>{ribbonIcons[b.icon]}</IconSlot>
                  <RibbonLabel>{b.label}</RibbonLabel>
                </RibbonButton>
              ))}
            </RibbonButtons>
            <GroupLabel>{g.label}</GroupLabel>
          </RibbonGroup>
        ))}
      </Ribbon>

      <FilterBar>
        {['普宁地下室', '基础层', '基础', '基础梁', '2-DKL2', '分层1'].map((t, i) => (
          <SelectBox key={t} $ml={i === 0 ? -34 : 0}>{t}<Caret /></SelectBox>
        ))}
      </FilterBar>

      <Main>
        <LeftPanel>
          <LeftHead>
            <ViewButton>
              <S w={16} h={16}>
                <path d="M1 3h3M1 8h3M1 13h3M6 3h9M6 8h9M6 13h9" stroke={BLUE} strokeWidth="1.4" />
              </S>
            </ViewButton>
            <ViewButton>
              <S w={16} h={16}>
                <rect x="0.5" y="1.5" width="15" height="13" stroke={BLUE} fill="#fff" />
                <rect x="0" y="1" width="16" height="4" fill={BLUE} />
                <path d="M3 8h7M3 11h10" stroke={BLUE} />
              </S>
            </ViewButton>
          </LeftHead>
          <LeftList>
            {leftRows.map((r, i) => (
              <LeftRow key={i} $active={r.active}>
                <LeftMark $c={r.c} $plain={r.plain} />
                {r.t}
              </LeftRow>
            ))}
          </LeftList>
          <LeftScroll />
        </LeftPanel>

        <MiddleColumn>
          <Panel $h={330}>
            <PanelStrip>×</PanelStrip>
            <PanelTabs>
              <PanelTab $active>构件列表</PanelTab>
              <PanelTab>图纸管理</PanelTab>
            </PanelTabs>
            <MiniBar>
              <MiniItem $w={68}>{miniIcons.add}新建<Caret $ml={5} /></MiniItem>
              <MiniItem $w={59}>{miniIcons.del}删除</MiniItem>
              <MiniItem $w={57}>{miniIcons.copy}复制</MiniItem>
              <MiniItem $w={70}>{miniIcons.floor}层间复制</MiniItem>
              <MoreMark>▸▸</MoreMark>
            </MiniBar>
            <SearchRow>搜索构件...{miniIcons.search}</SearchRow>
            <TreeWrap>
              <TreeRow $indent={10}><TreeArrow />基础梁</TreeRow>
              <TreeRow $indent={30}><TreeArrow />基础主梁</TreeRow>
              {treeItems.map((t) => (
                <TreeRow key={t} $indent={60}>
                  <TreeLabel $active={t === '2-DKL2'}>{t}</TreeLabel>
                </TreeRow>
              ))}
            </TreeWrap>
            <VScroll $top={96} $h={23} />
          </Panel>

          <Panel $h={507}>
            <PanelStrip>×</PanelStrip>
            <PanelTabs>
              <PanelTab $active>属性列表</PanelTab>
              <PanelTab>图层管理</PanelTab>
            </PanelTabs>
            <PropHead>
              <PropHeadCell $blank />
              <PropHeadCell>属性名称</PropHeadCell>
              <PropHeadCell>属性值</PropHeadCell>
            </PropHead>
            <PropBody>
              {propRows.map(([name, value, link, gray], i) => (
                <PropRow key={i}>
                  <PropIndex>{i + 1}</PropIndex>
                  <PropName $link={link}>{name}</PropName>
                  <PropValue $gray={gray}>{value}</PropValue>
                </PropRow>
              ))}
            </PropBody>
            <HScroll>
              <SideArrow $left />
              <HThumb />
              <SideArrow />
            </HScroll>
            <VArrow $up $top={37} />
            <VScroll $top={43} $h={333} />
            <VArrow $top={482} />
          </Panel>
        </MiddleColumn>

        <Gutter><GutterDark /></Gutter>

        <RightColumn>
          <DrawingCanvas />
          <Splitter><SplitterGrip /></Splitter>
          <RebarPanel>
            <PanelStrip />
            <RebarTitle>编辑钢筋</RebarTitle>
            <RebarToolbar>
              <NavMark $w={27}>|&lt;</NavMark>
              <NavMark $w={22}>&lt;</NavMark>
              <NavMark $w={23}>&gt;</NavMark>
              <NavMark $w={22}>&gt;|</NavMark>
              <MiniItem $w={23}>{miniIcons.up}</MiniItem>
              <MiniItem $w={25}>{miniIcons.down}</MiniItem>
              <MiniItem $w={56}>{miniIcons.insert}插入</MiniItem>
              <MiniItem $w={60}>{miniIcons.del}删除</MiniItem>
              <MiniItem $w={81}>{miniIcons.scale}缩尺配筋</MiniItem>
              <MiniItem $w={81}>{miniIcons.info}钢筋信息</MiniItem>
              <MiniItem $w={83}>{miniIcons.library}钢筋图库</MiniItem>
              <MiniItem $w={68}>{miniIcons.other}其他<Caret $ml={5} /></MiniItem>
              <RebarTotal>单构件钢筋总重(kg)：30.624</RebarTotal>
            </RebarToolbar>
            <RebarTable>
              <RebarGrid>
                <HeadCell />
                <HeadCell $key>筋号</HeadCell>
                {rebarHead.map((t, i) => <HeadCell key={i} $wrap={t === '弯曲调整'}>{t}</HeadCell>)}
                {rebarRows.map((r) => <RebarRow key={r.n} r={r} />)}
                <RowHead>3</RowHead>
                {Array.from({ length: 16 }).map((_, i) => <DataCell key={i} $blank />)}
              </RebarGrid>
              <TableFiller />
              <TableScroll><TableThumb /></TableScroll>
            </RebarTable>
          </RebarPanel>
        </RightColumn>
      </Main>

      <StatusBar>
        <StatusText $w={171} $ml={-3}>55510 Y = 105140</StatusText>
        <StatusText $w={82}>层高：3</StatusText>
        <StatusText $w={135}>标高: 27.9~30.9</StatusText>
        <StatusText $w={102}>1(47)</StatusText>
        <StatusText $w={80}>隐藏：0</StatusText>
        <StatusButton $w={25}>|</StatusButton>
        <StatusButton $w={36} $blue>
          <S w={16} h={14}>
            <rect x="3.5" y="3.5" width="11" height="11" stroke={BLUE} />
            <rect x="0" y="0" width="6" height="6" fill={ORANGE} />
          </S>
        </StatusButton>
        <StatusButton $w={25}>
          <S w={14} h={14}><path d="M1 1L7 8L13 1M7 8V14" stroke={GRAY} /></S>
        </StatusButton>
        <StatusButton $w={36}>
          <S w={12} h={14}><path d="M2 14L8 2" stroke="#333" strokeWidth="1.4" /></S>
        </StatusButton>
        <StatusButton $w={36} $blue>
          <S w={12} h={14}><path d="M6 2V12M1 7H11" stroke={BLUE} /></S>
        </StatusButton>
        <StatusButton $w={73}>跨图层选择</StatusButton>
        <StatusButton $w={61}>折线选择</StatusButton>
        <StatusText $w={300}>按鼠标左键指定第一个角点，或拾取构件图元</StatusText>
      </StatusBar>

      <Tooltip>按鼠标左键指定第一个角点，或拾取构件图元</Tooltip>

      <ArrowOverlay viewBox="0 0 1591 1008">
        <polygon points="319,718.5 991,515 987,509 1006,514 995,528 993,522 319,719.5" fill="#ff3a3a" />
        <polygon points="1017.5,556 1018,557 899,909 884,921 882.7,902 888,905" fill="#f63c3c" />
      </ArrowOverlay>
    </Page>
  </>
);

export default App;
